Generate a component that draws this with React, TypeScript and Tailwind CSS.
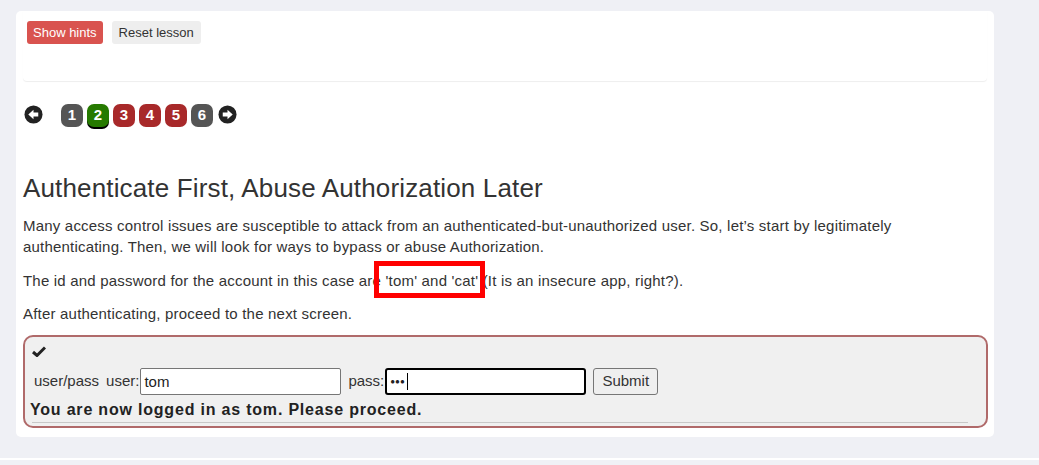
import React from 'react';

const pages = [
  { n: 1, cls: 'bg-[#555555]' },
  { n: 2, cls: 'bg-[#267a00] shadow-[0_2px_0_#000]' },
  { n: 3, cls: 'bg-[#a8292a]' },
  { n: 4, cls: 'bg-[#a8292a]' },
  { n: 5, cls: 'bg-[#a8292a]' },
  { n: 6, cls: 'bg-[#555555]' },
];

const Arrow: React.FC<{ dir: 'left' | 'right' }> = ({ dir }) => (
  <svg width="19" height="19" viewBox="0 0 20 20" className="block">
    <circle cx="10" cy="10" r="9.5" fill="#222" />
    {dir === 'left' ? (
      <path d="M4.5 10 L10 5 L10 8 L15 8 L15 12 L10 12 L10 15 Z" fill="#fff" />
    ) : (
      <path d="M15.5 10 L10 5 L10 8 L5 8 L5 12 L10 12 L10 15 Z" fill="#fff" />
    )}
  </svg>
);

export default function App() {
  return (
    <div className="w-[1039px] h-[465px] bg-[#eff0f5] overflow-hidden font-['Liberation_Sans',Arial,sans-serif] text-[#333]">
      <div className="ml-[16px] pt-[11px]">
        <div className="w-[978px] h-[426px] bg-white rounded-[5px] px-[7px]">
          {/* lesson buttons */}
          <div className="h-[70px] pl-[4px] pt-[10px] rounded-b-[4px] shadow-[0_1px_1px_rgba(0,0,0,0.07)]">
            <div className="flex gap-[9px]">
              <button className="h-[23px] px-[6px] rounded-[3px] bg-[#d9534f] text-white text-[13px] leading-[23px]">
                Show hints
              </button>
              <button className="h-[23px] px-[7px] rounded-[3px] bg-[#eeeeee] text-[#333] text-[13px] leading-[23px]">
                Reset lesson
              </button>
            </div>
          </div>

          {/* pagination */}
          <div className="flex items-start mt-[23px] ml-[1px]">
            <div className="mt-[1px]">
              <Arrow dir="left" />
            </div>
            <div className="flex gap-[4px] ml-[18px]">
              {pages.map((p) => (
                <div
                  key={p.n}
                  className={`w-[22px] h-[23px] rounded-[7px] flex items-center justify-center text-white font-bold text-[15px] ${p.cls}`}
                >
                  {p.n}
                </div>
              ))}
            </div>
            <div className="mt-[1px] ml-[5px]">
              <Arrow dir="right" />
            </div>
          </div>

          {/* lesson content */}
          <h2 className="mt-[46px] text-[26px] leading-[30px] tracking-[0.15px] font-normal text-[#333]">
            Authenticate First, Abuse Authorization Later
          </h2>
          <p className="mt-[12px] text-[15px] leading-[21px] tracking-[0.2px]">
            Many access control issues are susceptible to attack from an authenticated-but-unauthorized user. So, let’s start by legitimately authenticating. Then, we will look for ways to bypass or abuse Authorization.
          </p>
          <p className="mt-[13px] text-[15px] leading-[21px] tracking-[0.2px] relative">
            The id and password for the account in this case are 'tom' and 'cat' (It is an insecure app, right?).
            <span className="absolute left-[351px] top-[-9px] w-[111px] h-[37px] border-[5px] border-[#ff0000]" />
          </p>
          <p className="mt-[12px] text-[15px] leading-[21px] tracking-[0.2px]">After authenticating, proceed to the next screen.</p>

          {/* attack form */}
          <div className="mt-[11px] w-[965px] h-[93px] border-2 border-[#b06a6a] rounded-[10px] bg-[#f0f0f0] px-[6px] pt-[9px]">
            <svg width="14" height="11" viewBox="0 0 14 11" className="block ml-[1px]">
              <path d="M1 6 L5 9.5 L13 1.5" stroke="#222" strokeWidth="3" fill="none" />
            </svg>
            <div className="flex items-center mt-[11px] text-[15px] text-[#333]">
              <span className="ml-[3px]">user/pass</span>
              <span className="ml-[7px]">user:</span>
              <input
                readOnly
                value="tom"
                className="ml-[1px] w-[201px] h-[27px] border border-[#767676] rounded-[2px] bg-white px-[3px] text-[15px] text-[#222] outline-none"
              />
              <span className="ml-[7px]">pass:</span>
              <div className="ml-[1px] w-[201px] h-[27px] border-2 border-black rounded-[3px] bg-white flex items-center px-[3px] text-[#222]">
                <span className="text-[8px] tracking-[0px]">●●●</span>
                <span className="ml-[2px] w-[1px] h-[17px] bg-black" />
              </div>
              <button className="ml-[7px] w-[65px] h-[27px] border border-[#767676] rounded-[3px] bg-[#efefef] text-[15px] text-[#333]">
                Submit
              </button>
            </div>
            <div className="mt-[6px] font-bold text-[16px] leading-[18px] tracking-[0.8px] text-[#222] -ml-[1px]">
              You are now logged in as tom. Please proceed.
            </div>
            <div className="mt-[3px] h-[1px] bg-[#c8c8c8] w-[936px] ml-[1px]" />
          </div>
        </div>
      </div>
      <div className="mt-[21px] h-[2px] bg-white" />
      <div className="h-[10px] bg-[#f0f1f6]" />
    </div>
  );
}
